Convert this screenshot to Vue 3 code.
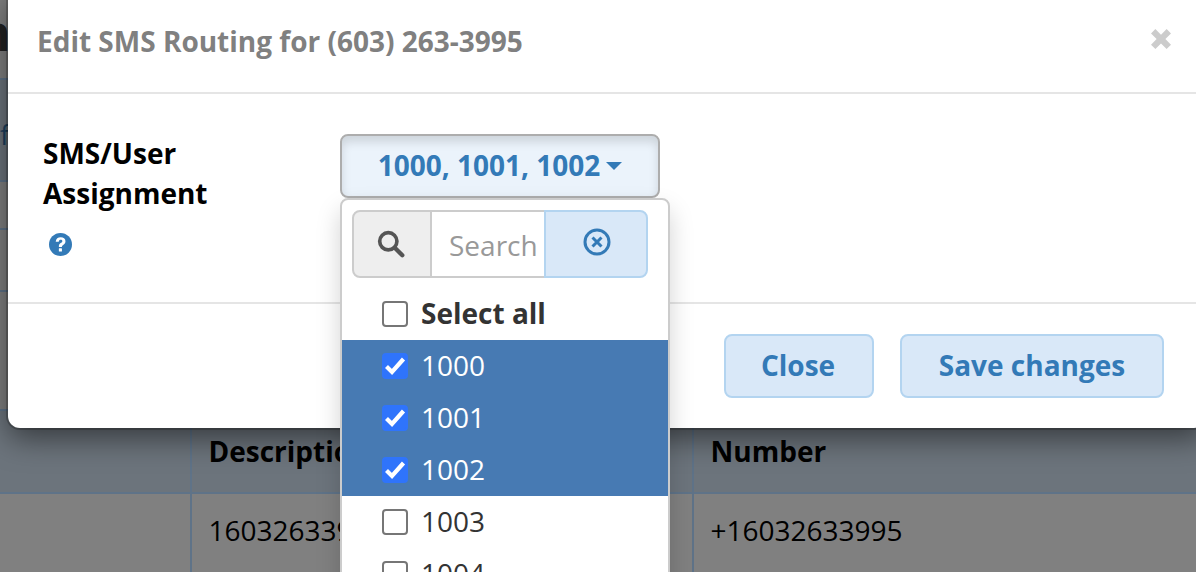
<script setup>
const items = [
  { label: '1000', on: true },
  { label: '1001', on: true },
  { label: '1002', on: true },
  { label: '1003', on: false },
  { label: '1004', on: false }
]
</script>

<template>
  <div class="page">
    <div class="behind">
      <div class="band plain h1"><span class="s-n">n</span></div>
      <div class="band tint h2"><span class="s-f">f</span></div>
      <div class="band plain h3"></div>
      <div class="band plain h4b"></div>
      <div class="band plain h5"></div>
      <div class="row head">
        <div class="cell c1"></div>
        <div class="cell c2">Description</div>
        <div class="cell c3">Number</div>
      </div>
      <div class="row body">
        <div class="cell c1"></div>
        <div class="cell c2">16032633995</div>
        <div class="cell c3">+16032633995</div>
      </div>
    </div>

    <div class="modal">
      <div class="m-head">
        <h4>Edit SMS Routing for (603) 263-3995</h4>
        <svg class="x" viewBox="2 2 16 16"><path d="M2 5.500l3.500-3.500 4.500 4.500 4.500-4.500 3.500 3.500-4.500 4.500 4.500 4.500-3.500 3.500-4.500-4.500-4.500 4.500-3.500-3.500 4.500-4.500z" fill="#ccc"/></svg>
      </div>
      <div class="m-body">
        <div class="lab">
          <div class="lab-text">SMS/User Assignment</div>
          <svg class="help" viewBox="0 0 24 24">
            <circle cx="12" cy="12" r="12" fill="#337ab7"/>
            <path d="M7 9c.2-3 2.400-4.500 5.200-4.500 2.800 0 5 1.600 5 4.200 0 2-1.100 3-2.400 3.800-1.100.7-1.300 1.100-1.300 2h-3.200c-.1-2.100.5-3.100 1.800-4 1.100-.7 1.800-1.200 1.800-2 0-.9-.7-1.400-1.700-1.400-1.100 0-1.800.6-2 1.900z" fill="#fff"/>
            <rect x="10.300" y="16" width="3.200" height="3.400" rx=".4" fill="#fff"/>
          </svg>
        </div>
        <div class="ctl">
          <button class="toggle">1000, 1001, 1002<span class="caret"></span></button>
          <div class="menu">
            <div class="search">
              <span class="addon">
                <svg viewBox="0 0 26 26" class="mag"><circle cx="10.500" cy="10.500" r="8" fill="none" stroke="#555" stroke-width="3.400"/><path d="M16.500 16.500l7 7" stroke="#555" stroke-width="4" stroke-linecap="round"/></svg>
              </span>
              <span class="input">Search</span>
              <span class="clear">
                <svg viewBox="0 0 28 28" class="clr"><circle cx="14" cy="14" r="12" fill="none" stroke="#337ab7" stroke-width="3"/><path d="M9.500 9.500l9 9M18.500 9.500l-9 9" stroke="#337ab7" stroke-width="3"/></svg>
              </span>
            </div>
            <div class="opt all"><span class="cb"></span><b>Select all</b></div>
            <div v-for="i in items" :key="i.label" class="opt" :class="{ on: i.on }">
              <span class="cb">
                <svg v-if="i.on" viewBox="0 0 26 26"><path d="M4.500 13.500l5.500 5.500 11.500-13" fill="none" stroke="#fff" stroke-width="4.200"/></svg>
              </span>{{ i.label }}
            </div>
          </div>
        </div>
      </div>
      <div class="m-foot">
        <button class="btn close">Close</button>
        <button class="btn save">Save changes</button>
      </div>
    </div>
  </div>
</template>

<style>
html, body { margin: 0; background: #808080; overflow: hidden; }
</style>

<style scoped>
.page {
  position: relative; width: 1196px; height: 572px; overflow: hidden;
  font-family: "Open Sans", sans-serif; background: #808080; color: #000;
}
.behind { display: flex; flex-direction: column; height: 100%; }
.band { box-sizing: border-box; border-bottom: 2px solid #5f7388; flex: none; overflow: hidden; position: relative; }
.plain { background: #808080; }
.tint { background: #6c747c; }
.h1 { height: 80px; }
.h2 { height: 102px; }
.h3 { height: 48px; }
.h4b { height: 62px; }
.h5 { height: 119px; }
.s-n { position: absolute; left: -21px; top: 3px; font-size: 48px; font-weight: 700; line-height: 60px; color: #222; }
.s-f { position: absolute; left: 0; top: 35px; font-size: 28px; line-height: 38px; color: #1d3f5e; }
.row { display: flex; box-sizing: border-box; flex: none; }
.cell { font-size: 28px; padding-left: 16.5px; box-sizing: border-box; border-right: 2px solid #5f7388; }
.c1 { width: 192px; padding: 0; }
.c2 { width: 502px; }
.c3 { flex: 1; border-right: 0; }
.head { height: 83px; background: #6c747c; font-weight: 700; border-bottom: 2px solid #5f7388; }
.head .cell { padding-top: 21px; }
.body { height: 79px; }
.body .cell { padding-top: 17px; }

.modal {
  position: absolute; left: 8px; top: -12px; right: -10px; bottom: 144px;
  background: #fff; border-radius: 12px;
  box-shadow: 0 0 0 2px rgba(0,0,0,.2), 0 10px 30px rgba(0,0,0,.5);
  display: flex; flex-direction: column;
}
.m-head {
  height: 106px; box-sizing: border-box; padding: 12px 0 10px 29px;
  display: flex; align-items: center; justify-content: space-between;
  border-bottom: 2px solid #e5e5e5; flex: none;
}
h4 { margin: 0; font-size: 28px; font-weight: 700; color: #808080; }
.x { width: 20px; height: 20px; margin-right: 35px; margin-top: -4px; }
.m-body { height: 210px; flex: none; display: flex; box-sizing: border-box; padding: 40px 0 0 35px; border-bottom: 2px solid #e5e5e5; }
.lab { width: 297px; font-size: 28px; font-weight: 700; line-height: 40px; margin-top: -1px; }
.lab-text { width: 200px; }
.help { width: 23px; height: 23px; display: block; margin: 20px 0 0 6px; }
.ctl { position: relative; }
.toggle {
  width: 320px; height: 64px; box-sizing: border-box;
  border: 2px solid #adadad; border-radius: 8px;
  background: #ebf3fb; color: #337ab7;
  box-shadow: inset 0 6px 10px rgba(0,0,0,.125);
  font: 700 28px "Open Sans", sans-serif; padding: 0 0 2px;
  display: flex; align-items: center; justify-content: center;
}
.caret {
  margin: 2px 0 0 6px; width: 0; height: 0;
  border-left: 8px solid transparent; border-right: 8px solid transparent; border-top: 8px solid #337ab7;
}
.menu {
  position: absolute; left: 0; top: 64px; width: 330px; height: 400px; box-sizing: border-box;
  background: #fff; border: 2px solid #ccc; border-radius: 8px;
  box-shadow: 0 12px 24px rgba(0,0,0,.175); padding-top: 10px;
}
.search {
  display: flex; height: 68px; margin: 0 20px 10px 10px; box-sizing: border-box; font-size: 28px;
}
.addon {
  width: 80px; background: #eee; border: 2px solid #ccc; border-radius: 8px 0 0 8px; box-sizing: border-box;
  display: flex; align-items: center; justify-content: center; padding-right: 2px;
}
.mag { width: 28px; height: 28px; }
.input {
  width: 112px; border: solid #ccc; border-width: 2px 0; box-sizing: border-box; color: #999;
  padding-left: 17px; line-height: 66px; overflow: hidden;
}
.clear {
  width: 104px; background: #d9e8f8; border: 2px solid #b3d4f0; border-radius: 0 8px 8px 0; box-sizing: border-box;
  display: flex; align-items: center; justify-content: center; padding: 0 0 4px 2px;
}
.clr { width: 28px; height: 28px; }
.opt {
  height: 52px; box-sizing: border-box; display: flex; align-items: center; padding: 0 0 2px 40px;
  font-size: 28px; color: #333; gap: 13px;
}
.opt.on { background: #477ab3; color: #fff; }
.all b { font-weight: 700; }
.cb {
  width: 26px; height: 26px; box-sizing: border-box; border: 2px solid #767676; border-radius: 4px; background: #fff; display: block; flex: none; margin-top: 2px;
}
.on .cb { background: #2f74fb; border-color: #2f74fb; position: relative; }
.on .cb svg { position: absolute; left: -2px; top: -2px; width: 26px; height: 26px; }
.m-foot { flex: 1; display: flex; justify-content: flex-end; align-items: flex-start; gap: 26px; padding: 30px 42px 0 0; }
.btn {
  height: 64px; width: 150px; box-sizing: border-box; background: #d9e8f8; border: 2px solid #b3d4f0; border-radius: 8px;
  color: #337ab7; font: 700 28px "Open Sans", sans-serif; padding: 0 0 2px;
}
.close { padding-right: 2px; }
.save { width: 264px; }
</style>
